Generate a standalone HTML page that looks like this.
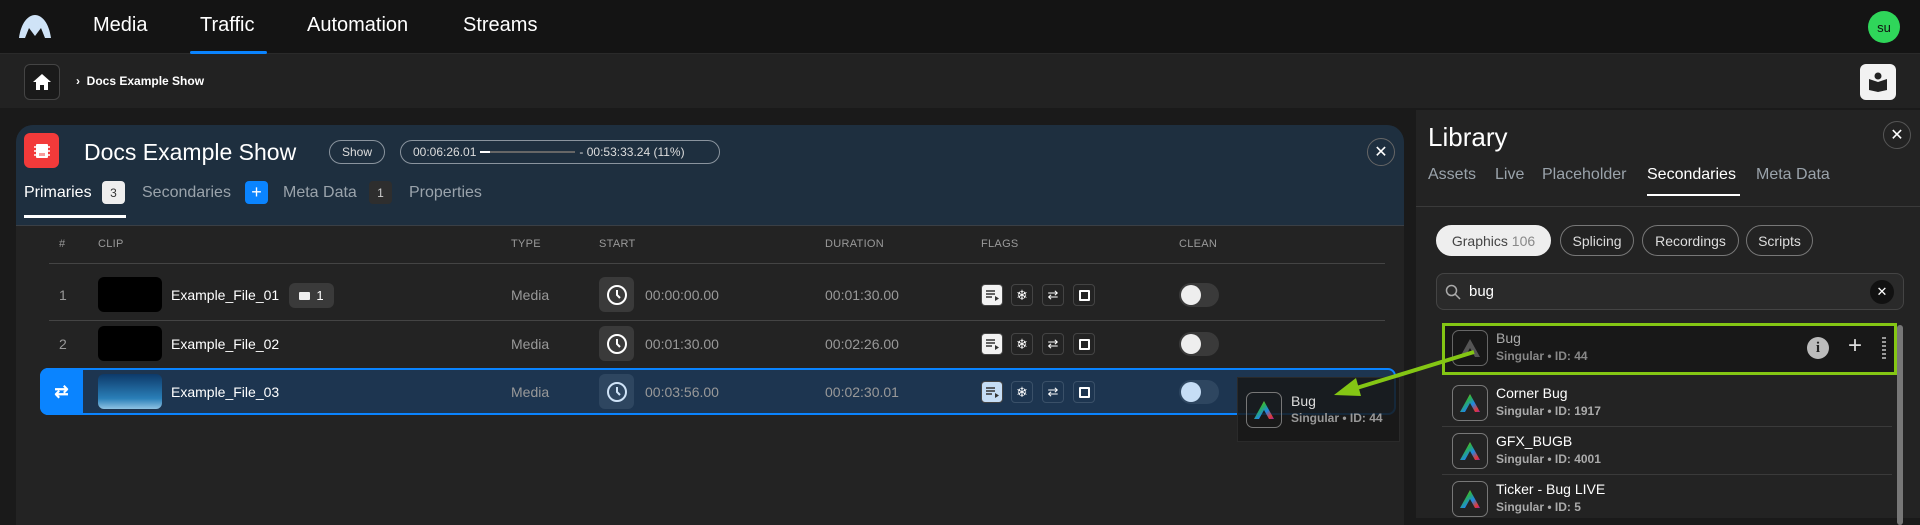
<!DOCTYPE html>
<html><head><meta charset="utf-8"><style>
*{box-sizing:border-box;margin:0;padding:0}
body{width:1920px;height:518px;overflow:hidden;background:#1a1a1a;font-family:"Liberation Sans",sans-serif;color:#fff;position:relative}
.a{position:absolute}
.nav{left:0;top:0;width:1920px;height:54px;background:#141414;border-bottom:1px solid #2a2a2a}
.navi{top:14px;font-size:20px;color:#fff}
.crumb{left:0;top:54px;width:1920px;height:54px;background:#222}
.lp{left:16px;top:125px;width:1388px;height:400px;background:#232323;border-radius:17px 17px 0 0;overflow:hidden}
.hd{left:0;top:0;width:1388px;height:101px;background:#1e2f3f;border-bottom:1px solid #3a3f45}
.pill{border:1px solid #8a949e;border-radius:14px;font-size:12px;color:#ddd;display:flex;align-items:center;justify-content:center}
.tab{font-size:16px;color:#9aa3ab;top:59px}
.badge{width:23px;height:23px;border-radius:4px;font-size:12px;display:flex;align-items:center;justify-content:center}
.ch{top:113px;font-size:11px;color:#9a9a9a;letter-spacing:.3px}
.row{left:0;width:1369px;height:48px}
.thumb{left:82px;top:6px;width:64px;height:35px;border-radius:6px;background:#000}
.nm{left:155px;top:16px;font-size:14px;color:#fff}
.ty{left:495px;top:16px;font-size:14px;color:#999}
.clk{left:583px;top:6px;width:35px;height:35px;border-radius:6px;background:#3a3a3a;display:flex;align-items:center;justify-content:center}
.st{left:629px;top:16px;font-size:14px;color:#999}
.du{left:809px;top:16px;font-size:14px;color:#999}
.fl{top:13px;width:22px;height:22px;border-radius:4px;border:1px solid #444;display:flex;align-items:center;justify-content:center}
.tg{left:1163px;top:12px;width:40px;height:24px;border-radius:12px;background:#3a3a3a}
.tg i{position:absolute;left:2px;top:2px;width:20px;height:20px;border-radius:10px;background:#eee}
.lib{left:1416px;top:110px;width:504px;height:408px;background:#232323}
.lt{top:56px;font-size:16px;color:#9aa3ab}
.chip{top:115px;height:31px;border:1px solid #777;border-radius:16px;font-size:14px;color:#ddd;display:flex;align-items:center;justify-content:center}
.it{left:26px;width:450px;height:48px}
.ib{left:10px;top:6px;width:36px;height:36px;border:1px solid #777;border-radius:7px;display:flex;align-items:center;justify-content:center}
.t1{left:54px;top:6px;font-size:14px;color:#fff}
.t2{left:54px;top:25px;font-size:12px;color:#aaa;font-weight:bold}
</style></head><body>
<svg width="0" height="0" style="position:absolute"><defs><linearGradient id="rg" x1="0" y1="0" x2="1" y2="1"><stop offset="0" stop-color="#f5c400"/><stop offset=".35" stop-color="#2bb24c"/><stop offset=".6" stop-color="#1e88e5"/><stop offset=".85" stop-color="#e53935"/><stop offset="1" stop-color="#8e24aa"/></linearGradient></defs></svg>

<div class="a nav">
 <svg class="a" style="left:18px;top:13px" width="34" height="26" viewBox="0 0 34 26"><path d="M1 25 C3 10 10 2 17 2 C24 2 31 10 33 25 L27 25 L23 15 L17 23 L11 15 L7 25 Z" fill="#cfe3f7"/></svg>
 <div class="a navi" style="left:93px">Media</div>
 <div class="a navi" style="left:200px">Traffic</div>
 <div class="a" style="left:190px;top:51px;width:77px;height:3px;background:#0a84ff;border-radius:2px"></div>
 <div class="a navi" style="left:307px">Automation</div>
 <div class="a navi" style="left:463px">Streams</div>
 <div class="a" style="left:1868px;top:11px;width:32px;height:32px;border-radius:16px;background:#2fd65a;color:#111;font-size:13px;display:flex;align-items:center;justify-content:center">su</div>
</div>
<div class="a crumb">
 <div class="a" style="left:24px;top:10px;width:36px;height:36px;border:1px solid #444;border-radius:6px;background:#1a1a1a;display:flex;align-items:center;justify-content:center"><svg width="20" height="20" viewBox="0 0 20 20"><path d="M10 2 L19 10 L16 10 L16 18 L12 18 L12 13 L8 13 L8 18 L4 18 L4 10 L1 10 Z" fill="#fff"/></svg></div>
 <div class="a" style="left:76px;top:20px;font-size:12px;font-weight:bold">›&nbsp; Docs Example Show</div>
 <div class="a" style="left:1860px;top:10px;width:36px;height:36px;border-radius:6px;background:#f2f2f2;display:flex;align-items:center;justify-content:center"><svg width="22" height="22" viewBox="0 0 22 22"><path d="M2 8 L11 11 L20 8 L20 19 L11 21 L2 19 Z" fill="#222"/><circle cx="11" cy="5" r="3.5" fill="#222"/></svg></div>
</div>

<div class="a lp">
 <div class="a hd">
  <div class="a" style="left:8px;top:8px;width:35px;height:35px;border-radius:6px;background:#f23a3a;display:flex;align-items:center;justify-content:center"><svg width="20" height="20" viewBox="0 0 20 20"><rect x="4" y="3" width="12" height="14" rx="1" fill="#fff"/><path d="M2 6h2M2 10h2M2 14h2M16 6h2M16 10h2M16 14h2" stroke="#fff" stroke-width="1.5"/><path d="M8 12v3M10 12v3M12 12v3" stroke="#f23a3a" stroke-width="1"/></svg></div>
  <div class="a" style="left:68px;top:14px;font-size:23px">Docs Example Show</div>
  <div class="a pill" style="left:313px;top:15px;width:56px;height:24px">Show</div>
  <div class="a pill" style="left:384px;top:15px;width:320px;height:24px;justify-content:flex-start;padding-left:12px">00:06:26.01 <span style="display:inline-block;width:95px;height:2px;background:#666;margin:0 4px;position:relative"><span style="position:absolute;left:0;top:0;width:10px;height:2px;background:#fff"></span></span> - 00:53:33.24 (11%)</div>
  <div class="a" style="left:1351px;top:13px;width:28px;height:28px;border-radius:14px;border:1px solid #666;display:flex;align-items:center;justify-content:center;font-size:16px">✕</div>
  <div class="a tab" style="left:8px;color:#fff">Primaries</div>
  <div class="a badge" style="left:86px;top:56px;background:#eee;color:#333">3</div>
  <div class="a tab" style="left:126px">Secondaries</div>
  <div class="a badge" style="left:229px;top:56px;background:#0a84ff;color:#fff;font-size:18px">+</div>
  <div class="a tab" style="left:267px">Meta Data</div>
  <div class="a badge" style="left:353px;top:56px;background:#2e2e2e;color:#ccc">1</div>
  <div class="a tab" style="left:393px">Properties</div>
  <div class="a" style="left:8px;top:90px;width:102px;height:3px;background:#fff"></div>
 </div>
 <div class="a ch" style="left:43px">#</div>
 <div class="a ch" style="left:82px">CLIP</div>
 <div class="a ch" style="left:495px">TYPE</div>
 <div class="a ch" style="left:583px">START</div>
 <div class="a ch" style="left:809px">DURATION</div>
 <div class="a ch" style="left:965px">FLAGS</div>
 <div class="a ch" style="left:1163px">CLEAN</div>
 <div class="a" style="left:33px;top:138px;width:1336px;height:1px;background:#444"></div>

 <div class="a row" style="top:146px">
  <div class="a" style="left:43px;top:16px;font-size:14px;color:#999">1</div>
  <div class="a thumb"></div><div class="a nm">Example_File_01</div>
  <div class="a" style="left:273px;top:12px;width:45px;height:25px;border-radius:6px;background:#3a3a3a;font-size:13px;display:flex;align-items:center;justify-content:center;gap:6px"><span style="display:inline-block;width:11px;height:8px;background:#eee;border-radius:1px"></span>1</div>
  <div class="a ty">Media</div>
  <div class="a clk"><svg width="22" height="22" viewBox="0 0 22 22"><circle cx="11" cy="11" r="9" fill="none" stroke="#fff" stroke-width="2"/><path d="M11 6v5l3 3" stroke="#fff" stroke-width="2" fill="none"/></svg></div>
  <div class="a st">00:00:00.00</div><div class="a du">00:01:30.00</div>
  <div class="a fl" style="left:965px;background:#f2f2f2"><svg width="14" height="12"><path d="M1 2h9M1 5h9M1 8h6" stroke="#333" stroke-width="1.6"/><path d="M10 7l4 2.5-4 2.5z" fill="#333"/></svg></div>
  <div class="a fl" style="left:995px;font-size:14px">❄</div>
  <div class="a fl" style="left:1026px;font-size:13px">⇄</div>
  <div class="a fl" style="left:1057px"><span style="width:11px;height:11px;border:2px solid #fff;border-radius:1px"></span></div>
  <div class="a tg"><i></i></div>
 </div>
 <div class="a" style="left:33px;top:195px;width:1336px;height:1px;background:#444"></div>
 <div class="a row" style="top:195px">
  <div class="a" style="left:43px;top:16px;font-size:14px;color:#999">2</div>
  <div class="a thumb"></div><div class="a nm">Example_File_02</div>
  <div class="a ty">Media</div>
  <div class="a clk"><svg width="22" height="22" viewBox="0 0 22 22"><circle cx="11" cy="11" r="9" fill="none" stroke="#fff" stroke-width="2"/><path d="M11 6v5l3 3" stroke="#fff" stroke-width="2" fill="none"/></svg></div>
  <div class="a st">00:01:30.00</div><div class="a du">00:02:26.00</div>
  <div class="a fl" style="left:965px;background:#f2f2f2"><svg width="14" height="12"><path d="M1 2h9M1 5h9M1 8h6" stroke="#333" stroke-width="1.6"/><path d="M10 7l4 2.5-4 2.5z" fill="#333"/></svg></div>
  <div class="a fl" style="left:995px;font-size:14px">❄</div>
  <div class="a fl" style="left:1026px;font-size:13px">⇄</div>
  <div class="a fl" style="left:1057px"><span style="width:11px;height:11px;border:2px solid #fff;border-radius:1px"></span></div>
  <div class="a tg"><i></i></div>
 </div>
 <div class="a row" style="left:24px;top:243px;width:1356px;height:47px;border:2px solid #0a84ff;border-radius:8px;background:#1d3550">
  <div class="a" style="left:-2px;top:-2px;width:43px;height:47px;background:#0a84ff;border-radius:8px 0 0 8px;display:flex;align-items:center;justify-content:center;font-size:17px;font-weight:bold">⇄</div>
  <div class="a thumb" style="left:56px;top:4px;background:linear-gradient(180deg,#0d3a6a,#2a7fb8 70%,#8fc3e3)"></div>
  <div class="a nm" style="left:129px;top:14px">Example_File_03</div>
  <div class="a ty" style="left:469px;top:14px">Media</div>
  <div class="a clk" style="left:557px;top:4px;background:#2e4660"><svg width="22" height="22" viewBox="0 0 22 22"><circle cx="11" cy="11" r="9" fill="none" stroke="#cfe3f7" stroke-width="2"/><path d="M11 6v5l3 3" stroke="#cfe3f7" stroke-width="2" fill="none"/></svg></div>
  <div class="a st" style="left:603px;top:14px">00:03:56.00</div><div class="a du" style="left:783px;top:14px">00:02:30.01</div>
  <div class="a fl" style="left:939px;top:11px;background:#c6ddf5"><svg width="14" height="12"><path d="M1 2h9M1 5h9M1 8h6" stroke="#333" stroke-width="1.6"/><path d="M10 7l4 2.5-4 2.5z" fill="#333"/></svg></div>
  <div class="a fl" style="left:969px;top:11px;font-size:14px;border-color:#3a5068">❄</div>
  <div class="a fl" style="left:1000px;top:11px;font-size:13px;border-color:#3a5068">⇄</div>
  <div class="a fl" style="left:1031px;top:11px;border-color:#3a5068"><span style="width:11px;height:11px;border:2px solid #fff;border-radius:1px"></span></div>
  <div class="a tg" style="left:1137px;top:10px;background:#2e4660"><i style="background:#c6ddf5"></i></div>
 </div>
 <div class="a" style="left:1221px;top:252px;width:163px;height:65px;background:rgba(24,24,24,.85);border:1px solid #2a2a2a">
  <div class="a" style="left:8px;top:14px;width:36px;height:36px;border:1px solid #777;border-radius:7px;display:flex;align-items:center;justify-content:center"><svg width="22" height="20" viewBox="0 0 22 20"><path d="M11 1 L21 19 L16 19 L11 10 L6 19 L1 19 Z" fill="url(#rg)"/></svg></div>
  <div class="a" style="left:53px;top:15px;font-size:14px;color:#ddd">Bug</div>
  <div class="a" style="left:53px;top:33px;font-size:12px;color:#999;font-weight:bold">Singular • ID: 44</div>
 </div>
</div>

<div class="a lib">
 <div class="a" style="left:12px;top:12px;font-size:26px">Library</div>
 <div class="a" style="left:467px;top:11px;width:28px;height:28px;border-radius:14px;border:1px solid #555;display:flex;align-items:center;justify-content:center;font-size:16px">✕</div>
 <div class="a lt" style="left:12px">Assets</div>
 <div class="a lt" style="left:79px">Live</div>
 <div class="a lt" style="left:126px">Placeholder</div>
 <div class="a lt" style="left:231px;color:#fff">Secondaries</div>
 <div class="a lt" style="left:340px">Meta Data</div>
 <div class="a" style="left:231px;top:84px;width:93px;height:2px;background:#fff"></div>
 <div class="a" style="left:0;top:96px;width:504px;height:1px;background:#3a3a3a"></div>
 <div class="a chip" style="left:20px;width:115px;background:#eee;color:#444;border-color:#eee">Graphics&nbsp;<span style="color:#888">106</span></div>
 <div class="a chip" style="left:144px;width:74px">Splicing</div>
 <div class="a chip" style="left:226px;width:97px">Recordings</div>
 <div class="a chip" style="left:330px;width:67px">Scripts</div>
 <div class="a" style="left:20px;top:163px;width:468px;height:37px;border:1px solid #444;border-radius:8px;background:#2a2a2a">
  <svg class="a" style="left:8px;top:10px" width="16" height="16" viewBox="0 0 16 16"><circle cx="6.5" cy="6.5" r="5" fill="none" stroke="#aaa" stroke-width="1.5"/><path d="M10 10l5 5" stroke="#aaa" stroke-width="1.5"/></svg>
  <div class="a" style="left:32px;top:9px;font-size:15px">bug</div>
  <div class="a" style="left:433px;top:6px;width:24px;height:24px;border-radius:12px;background:#111;display:flex;align-items:center;justify-content:center;font-size:13px">✕</div>
 </div>
 <div class="a" style="left:26px;top:213px;width:455px;height:52px;border:3px solid #84c614;background:#181818">
  <div class="a" style="left:7px;top:4px;width:36px;height:36px;border:1px solid #666;border-radius:7px;display:flex;align-items:center;justify-content:center"><svg width="22" height="20" viewBox="0 0 22 20"><path d="M11 1 L21 19 L16 19 L11 10 L6 19 L1 19 Z" fill="#555"/></svg></div>
  <div class="a" style="left:51px;top:4px;font-size:14px;color:#aaa">Bug</div>
  <div class="a" style="left:51px;top:23px;font-size:12px;color:#888;font-weight:bold">Singular • ID: 44</div>
  <div class="a" style="left:362px;top:11px;width:22px;height:22px;border-radius:11px;background:#bbb;color:#222;font-size:15px;font-weight:bold;display:flex;align-items:center;justify-content:center;font-family:'Liberation Serif',serif">i</div>
  <div class="a" style="left:403px;top:6px;font-size:24px;color:#ddd">+</div>
  <div class="a" style="left:437px;top:11px;width:4px;height:22px;border-left:2px dotted #999;border-right:2px dotted #999"></div>
 </div>
 <div class="a it" style="top:269px;border-bottom:1px solid #3a3a3a"><div class="a ib"><svg width="22" height="20" viewBox="0 0 22 20"><path d="M11 1 L21 19 L16 19 L11 10 L6 19 L1 19 Z" fill="url(#rg)"/></svg></div><div class="a t1">Corner Bug</div><div class="a t2">Singular • ID: 1917</div></div>
 <div class="a it" style="top:317px;border-bottom:1px solid #3a3a3a"><div class="a ib"><svg width="22" height="20" viewBox="0 0 22 20"><path d="M11 1 L21 19 L16 19 L11 10 L6 19 L1 19 Z" fill="url(#rg)"/></svg></div><div class="a t1">GFX_BUGB</div><div class="a t2">Singular • ID: 4001</div></div>
 <div class="a it" style="top:365px"><div class="a ib"><svg width="22" height="20" viewBox="0 0 22 20"><path d="M11 1 L21 19 L16 19 L11 10 L6 19 L1 19 Z" fill="url(#rg)"/></svg></div><div class="a t1">Ticker - Bug LIVE</div><div class="a t2">Singular • ID: 5</div></div>
 <div class="a" style="left:481px;top:215px;width:6px;height:200px;background:#777;border-radius:3px"></div>
</div>

<svg class="a" style="left:0;top:0" width="1920" height="518"><line x1="1474" y1="352" x2="1350" y2="390" stroke="#84c614" stroke-width="4"/><path d="M1334 395 L1356 378 L1361 396 Z" fill="#84c614"/></svg>
</body></html>
